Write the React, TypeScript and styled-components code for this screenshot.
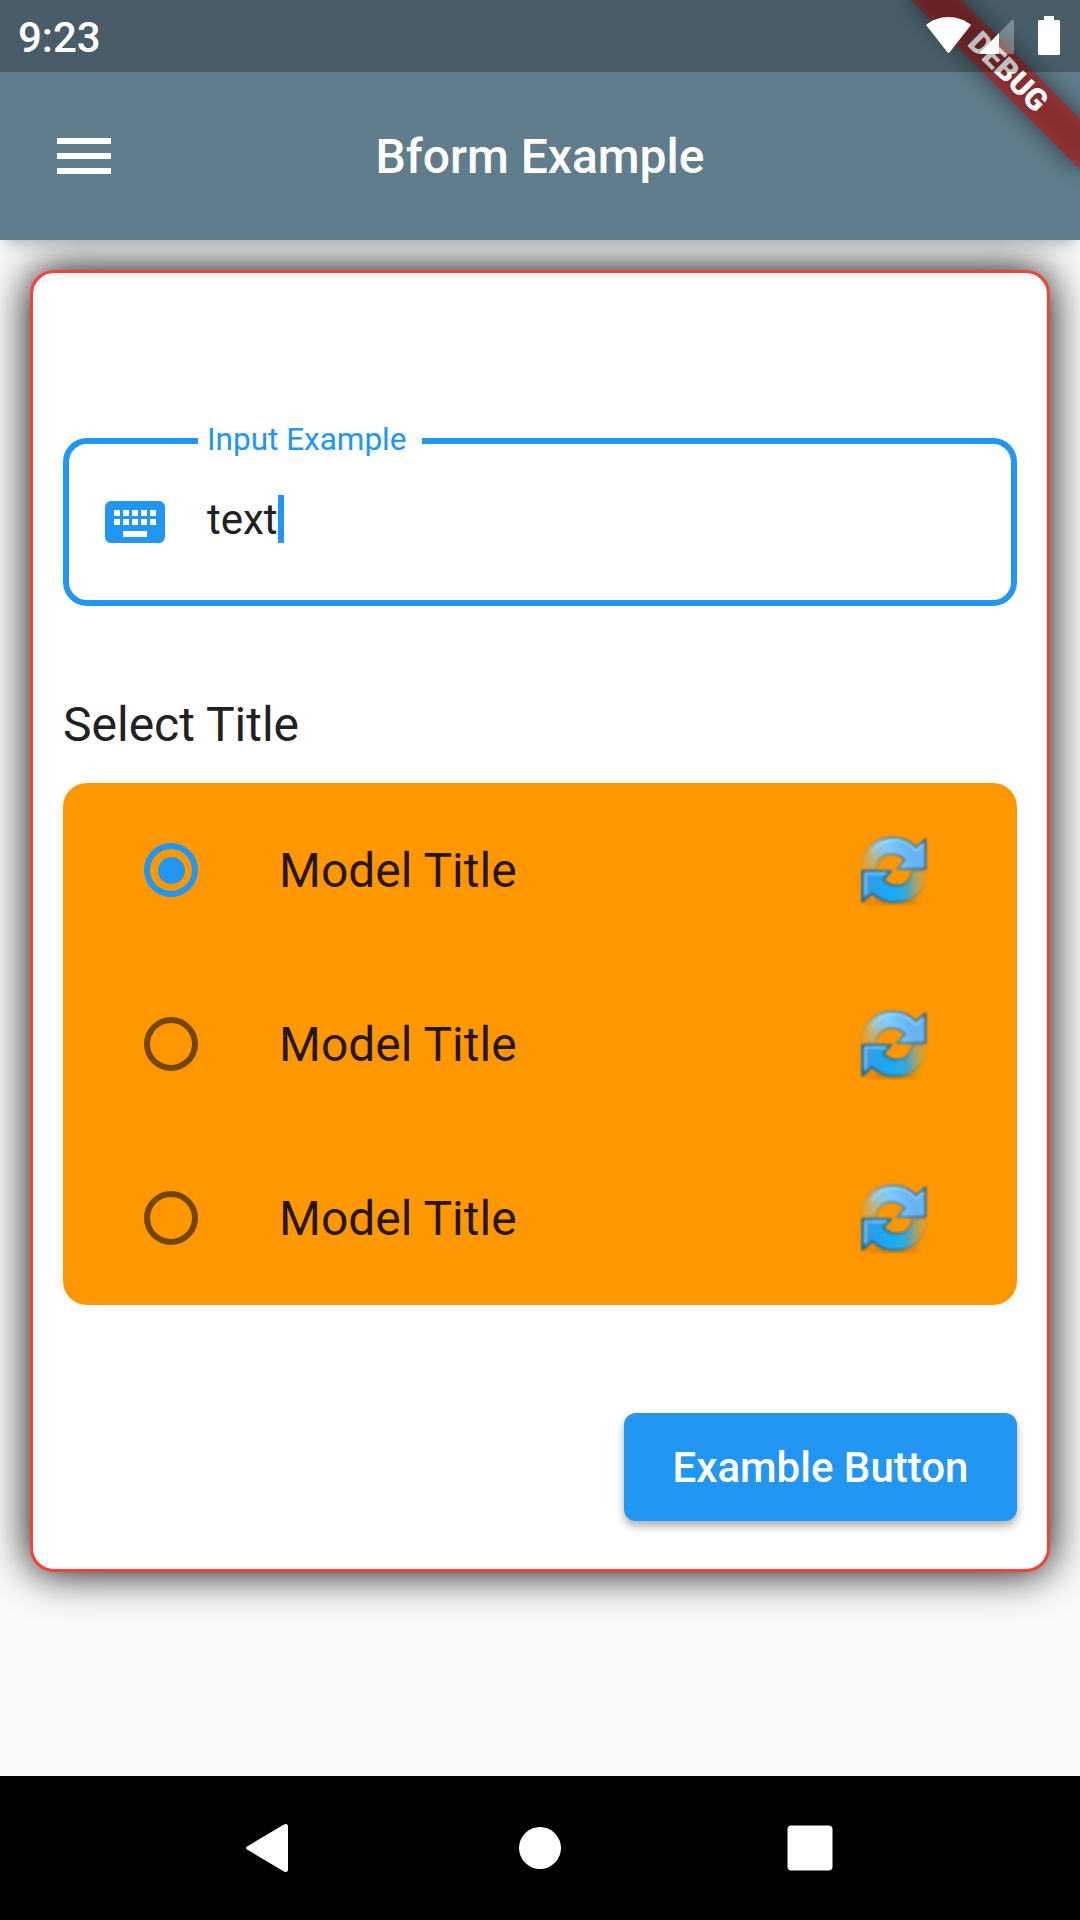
import React from "react";
import styled, { createGlobalStyle } from "styled-components";
import { MdKeyboard, MdMenu } from "react-icons/md";

const BLUE = "#2196f3";

const GlobalStyle = createGlobalStyle`
  *, *::before, *::after { box-sizing: border-box; }
  body { margin: 0; }
`;

const Screen = styled.div`
  position: relative;
  display: flex;
  flex-direction: column;
  width: 1080px;
  height: 1920px;
  overflow: hidden;
  background: #fafafa;
  color: #212121;
  font-family: Roboto, sans-serif;
`;

const Header = styled.header`
  position: relative;
  z-index: 1;
  flex: none;
  height: 240px;
  padding-top: 72px;
  background: #607d8b;
  box-shadow: 0 10px 14px -6px rgba(0, 0, 0, 0.28);
`;

const Toolbar = styled.div`
  display: grid;
  grid-template-columns: 168px 1fr 168px;
  align-items: center;
  height: 168px;
`;

const MenuButton = styled.button`
  display: flex;
  align-items: center;
  justify-content: center;
  width: 168px;
  height: 168px;
  padding: 0;
  border: 0;
  background: none;
  color: #fff;
`;

const Title = styled.h1`
  margin: 0;
  padding-top: 2px;
  color: #fff;
  font-size: 48px;
  font-weight: 500;
  line-height: 56px;
  text-align: center;
`;

const BannerClip = styled.div`
  position: absolute;
  z-index: 2;
  top: 0;
  right: 0;
  width: 240px;
  height: 240px;
  overflow: hidden;
  pointer-events: none;
`;

const Ribbon = styled.div`
  position: absolute;
  top: 54px;
  left: 48px;
  width: 240px;
  height: 36px;
  transform: rotate(45deg);
`;

const RibbonShadow = styled.div`
  position: absolute;
  inset: 0;
  background: rgba(0, 0, 0, 0.5);
  filter: blur(12px);
`;

const RibbonFace = styled.div`
  position: absolute;
  inset: 0;
  background: rgba(183, 28, 28, 0.627);
  color: #fff;
  font-size: 30.6px;
  font-weight: 900;
  line-height: 35px;
  text-align: center;
`;

const StatusBar = styled.div`
  position: absolute;
  z-index: 3;
  top: 0;
  left: 0;
  display: flex;
  align-items: center;
  justify-content: space-between;
  width: 1080px;
  height: 72px;
  padding-left: 18px;
  background: rgba(0, 0, 0, 0.25);
`;

const Clock = styled.span`
  padding-top: 3px;
  color: #fff;
  font-size: 42px;
  font-weight: 500;
  line-height: 74px;
`;

const Body = styled.main`
  flex: 1;
  padding: 30px;
`;

const Card = styled.section`
  display: flex;
  flex-direction: column;
  height: 1302px;
  padding: 165px 30px 0;
  border: 3px solid #f44336;
  border-radius: 24px;
  background: #fff;
  box-shadow: 0 0 44px #000;
`;

const Field = styled.div`
  position: relative;
  display: flex;
  flex: none;
  height: 168px;
  padding: 42px 30px 0;
  border: 6px solid ${BLUE};
  border-radius: 24px;
  color: ${BLUE};
`;

const FieldLabel = styled.label`
  position: absolute;
  top: -24px;
  left: 129px;
  width: 224px;
  padding-left: 9px;
  background: #fff;
  font-size: 31.5px;
  line-height: 40px;
  white-space: nowrap;
`;

const FieldValue = styled.div`
  display: flex;
  align-items: flex-start;
  height: 48px;
  margin: 9px 0 0 36px;
  color: #212121;
  font-size: 42px;
  line-height: 50px;
`;

const Caret = styled.span`
  width: 6px;
  height: 48px;
  background: ${BLUE};
`;

const SelectTitle = styled.h2`
  margin: 91px 0 30px;
  font-size: 48px;
  font-weight: 400;
  line-height: 56px;
`;

const Options = styled.div`
  flex: none;
  border-radius: 24px;
  background: #ff9800;
`;

const Option = styled.div`
  display: flex;
  align-items: center;
  height: 174px;
  padding: 0 87px 0 81px;
`;

const Radio = styled.span<{ $checked: boolean }>`
  display: flex;
  align-items: center;
  justify-content: center;
  width: 54px;
  height: 54px;
  border: 6px solid ${(p) => (p.$checked ? BLUE : "rgba(0, 0, 0, 0.54)")};
  border-radius: 50%;

  &::after {
    content: "";
    width: 27px;
    height: 27px;
    border-radius: 50%;
    background: ${(p) => (p.$checked ? BLUE : "transparent")};
  }
`;

const OptionText = styled.span`
  flex: 1;
  margin-left: 81px;
  padding-top: 2px;
  color: rgba(0, 0, 0, 0.87);
  font-size: 48px;
  line-height: 56px;
`;

const SubmitButton = styled.button`
  align-self: flex-end;
  flex: none;
  width: 393px;
  height: 108px;
  margin-top: 108px;
  padding: 1px 0 0;
  border: 0;
  border-radius: 12px;
  background: ${BLUE};
  box-shadow: 0 5px 9px rgba(0, 0, 0, 0.32);
  color: #fff;
  font: 500 42px/108px Roboto, sans-serif;
`;

const NavBar = styled.nav`
  display: flex;
  flex: none;
  align-items: center;
  justify-content: center;
  gap: 198px;
  height: 144px;
  background: #000;
`;

const StatusIcons = () => (
  <svg width="160" height="72" viewBox="920 0 160 72" fill="#fff">
    <path d="M926 25C932 20 940 17 948.5 17S965 20 971 25L949.6 52.2Q948.5 53.5 947.4 52.2Z" />
    <path
      fillOpacity=".3"
      d="M999 33V54H1012.5Q1014 54 1014 52.500V21.500Q1014 19 1012 20Z"
    />
    <path d="M999 33V54H981Q979.500 53.500 980.500 52Z" />
    <path d="M1044 16H1054V20H1058.500Q1060 20 1060 21.500V53.500Q1060 55 1058.500 55H1039.500Q1038 55 1038 53.500V21.500Q1038 20 1039.500 20H1044Z" />
  </svg>
);

const SyncIcon = ({ id }: { id: string }) => (
  <svg width="72" height="72" viewBox="0 0 72 72">
    <defs>
      <linearGradient id={`${id}-top`} x1="5" y1="30" x2="50" y2="12" gradientUnits="userSpaceOnUse">
        <stop offset="0" stopColor="#d8a850" stopOpacity=".55" />
        <stop offset=".4" stopColor="#94c2d0" />
        <stop offset=".65" stopColor="#7bcbff" />
        <stop offset="1" stopColor="#66b2f2" />
      </linearGradient>
      <linearGradient id={`${id}-low`} x1="4" y1="45" x2="67" y2="42" gradientUnits="userSpaceOnUse">
        <stop offset="0" stopColor="#3d96dd" />
        <stop offset=".45" stopColor="#12adfb" />
        <stop offset=".7" stopColor="#3ea8d2" />
        <stop offset="1" stopColor="#d8a040" stopOpacity=".55" />
      </linearGradient>
      <linearGradient id={`${id}-te`} x1="4" y1="0" x2="68" y2="0" gradientUnits="userSpaceOnUse">
        <stop offset="0" stopColor="#c08a35" stopOpacity=".3" />
        <stop offset=".4" stopColor="#6f979b" />
        <stop offset="1" stopColor="#38709c" />
      </linearGradient>
      <linearGradient id={`${id}-le`} x1="4" y1="0" x2="68" y2="0" gradientUnits="userSpaceOnUse">
        <stop offset="0" stopColor="#2c6390" />
        <stop offset=".6" stopColor="#38809b" />
        <stop offset="1" stopColor="#c08a35" stopOpacity=".3" />
      </linearGradient>
      <filter id={`${id}-blur`} x="-20%" y="-100%" width="140%" height="300%">
        <feGaussianBlur stdDeviation="2.5" />
      </filter>
      <filter id={`${id}-soft`}>
        <feGaussianBlur stdDeviation=".95" />
      </filter>
    </defs>
    <ellipse cx="34" cy="68" rx="28" ry="2.500" fill="#8a4d00" opacity=".45" filter={`url(#${id}-blur)`} />
    <g strokeWidth="2.600" strokeLinejoin="round" filter={`url(#${id}-soft)`}>
      <path
        d="M4 35C2 17 15 3.500 35 3.500C44 3.500 52 7 58 13.500L67.500 5.500V35H39L47 26C38 17 24 18 19 30L18 35Z"
        fill={`url(#${id}-top)`}
        stroke={`url(#${id}-te)`}
      />
      <path
        d="M68 37C70 55 57 68 37 68C28 68 20 65 14.500 59L4.500 67.500V37H33L25 45.500C34 55 48 54 53 42L54 37Z"
        fill={`url(#${id}-low)`}
        stroke={`url(#${id}-le)`}
      />
      <path d="M14 19C20 9 30 6 38 6C47 7 53 11 58 16.500L65 10.500" fill="none" stroke="#b3e3ff" strokeOpacity=".5" />
      <path d="M7.500 61V39.500H28" fill="none" stroke="#7cc8f5" strokeOpacity=".8" />
    </g>
  </svg>
);

const options = [
  { id: "first", label: "Model Title", checked: true },
  { id: "second", label: "Model Title", checked: false },
  { id: "third", label: "Model Title", checked: false },
];

export default function App() {
  return (
    <>
      <GlobalStyle />
      <Screen>
        <Header>
          <Toolbar>
            <MenuButton aria-label="Menu">
              <MdMenu size={72} />
            </MenuButton>
            <Title>Bform Example</Title>
          </Toolbar>
        </Header>
        <BannerClip>
          <Ribbon>
            <RibbonShadow />
            <RibbonFace>DEBUG</RibbonFace>
          </Ribbon>
        </BannerClip>
        <StatusBar>
          <Clock>9:23</Clock>
          <StatusIcons />
        </StatusBar>
        <Body>
          <Card>
            <Field>
              <MdKeyboard size={72} />
              <FieldLabel>Input Example</FieldLabel>
              <FieldValue>
                text
                <Caret />
              </FieldValue>
            </Field>
            <SelectTitle>Select Title</SelectTitle>
            <Options>
              {options.map((o) => (
                <Option key={o.id}>
                  <Radio $checked={o.checked} />
                  <OptionText>{o.label}</OptionText>
                  <SyncIcon id={o.id} />
                </Option>
              ))}
            </Options>
            <SubmitButton>Examble Button</SubmitButton>
          </Card>
        </Body>
        <NavBar>
          <svg width="72" height="72" viewBox="0 0 72 72" fill="#fff">
            <path d="M13.500 34.200 50 12.600Q54 10.800 54 15V57Q54 61.200 50 59.400L13.500 37.800Q10.500 36 13.500 34.200Z" />
          </svg>
          <svg width="72" height="72" viewBox="0 0 72 72" fill="#fff">
            <circle cx="36" cy="36" r="21" />
          </svg>
          <svg width="72" height="72" viewBox="0 0 72 72" fill="#fff">
            <rect x="13.500" y="13.500" width="45" height="45" rx="4" />
          </svg>
        </NavBar>
      </Screen>
    </>
  );
}
